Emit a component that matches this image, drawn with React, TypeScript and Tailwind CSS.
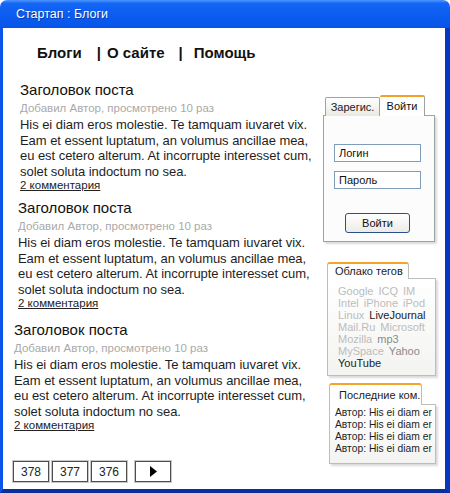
import React from "react";

// Wireframe of a blog page inside an XP-style window

type Post = {
  offset: string;
  gap: string;
};

const POSTS: Post[] = [
  { offset: "ml-[17px]", gap: "mt-[17px]" },
  { offset: "ml-[15px]", gap: "mt-[7px]" },
  { offset: "ml-[11px]", gap: "mt-[11px]" },
];

const BODY_LINES = [
  "His ei diam eros molestie. Te tamquam iuvaret vix.",
  "Eam et essent luptatum, an volumus ancillae mea,",
  "eu est cetero alterum. At incorrupte interesset cum,",
  "solet soluta indoctum no sea.",
];

const TAG_LINES: { text: string; dark?: boolean; mid?: boolean }[][] = [
  [{ text: "Google" }, { text: "ICQ" }, { text: "IM" }],
  [{ text: "Intel" }, { text: "iPhone" }, { text: "iPod" }],
  [{ text: "Linux" }, { text: "LiveJournal", dark: true }],
  [{ text: "Mail.Ru" }, { text: "Microsoft" }],
  [{ text: "Mozilla" }, { text: "mp3", mid: true }],
  [{ text: "MySpace" }, { text: "Yahoo", mid: true }],
  [{ text: "YouTube", dark: true }],
];

function PostBlock({ post }: { post: Post }) {
  return (
    <div className={`${post.offset} ${post.gap}`}>
      <h2 className="text-[15px] leading-[20px] text-[#111]">Заголовок поста</h2>
      <p className="text-[11.5px] leading-[17px] text-[#a9a9a9]">
        Добавил Автор, просмотрено 10 раз
      </p>
      <div className="text-[13px] leading-[15.5px] text-[#1e1e1e] whitespace-nowrap tracking-[-0.05px]">
        {BODY_LINES.map((line) => (
          <div key={line}>{line}</div>
        ))}
      </div>
      <a className="block text-[11.5px] leading-[12px] text-[#222] underline underline-offset-[1px]">
        2 комментария
      </a>
    </div>
  );
}

function PagerButton({ children }: { children: React.ReactNode }) {
  return (
    <div className="w-[36px] h-[21px] flex items-center justify-center border border-[#4d4d4d] bg-white shadow-[0_0_0_1px_#c8c8c8] text-[12px] text-[#222]">
      {children}
    </div>
  );
}

export default function App() {
  return (
    <div
      className="w-[450px] h-[493px] flex flex-col bg-white"
      style={{ fontFamily: '"Liberation Sans", Arial, sans-serif' }}
    >
      {/* Title bar */}
      <div className="h-[28px] shrink-0 rounded-t-[7px] bg-[linear-gradient(to_bottom,#4b97ff_0%,#1466f5_12%,#0b5cf0_55%,#0954e8_100%)] flex items-center pl-[16px]">
        <span className="text-[12.5px] text-white [text-shadow:1px_1px_0_#0a3aa8]">
          Стартап : Блоги
        </span>
      </div>

      {/* Window body */}
      <div className="flex-1 flex border-l-[3px] border-l-[#0b55ea] border-r-[5px] border-r-[#0737bf] border-b-[4px] border-b-[#08309c]">
        {/* Main column */}
        <main className="w-[319px] flex flex-col">
          <nav className="mt-[15px] ml-[34px] flex items-center h-[20px] text-[15px] font-bold text-[#111]">
            <span>Блоги</span>
            <span className="ml-[15px]">|</span>
            <span className="ml-[6px]">О сайте</span>
            <span className="ml-[14px]">|</span>
            <span className="ml-[11px]">Помощь</span>
          </nav>

          {POSTS.map((post, i) => (
            <PostBlock key={i} post={post} />
          ))}

          {/* Pager */}
          <div className="mt-auto mb-[7px] ml-[10px] flex items-center">
            <PagerButton>378</PagerButton>
            <div className="ml-[3px]">
              <PagerButton>377</PagerButton>
            </div>
            <div className="ml-[3px]">
              <PagerButton>376</PagerButton>
            </div>
            <div className="ml-[8px]">
              <PagerButton>
                <svg width="8" height="11" viewBox="0 0 8 11">
                  <polygon points="1,0 8,5.5 1,11" fill="#000" />
                </svg>
              </PagerButton>
            </div>
          </div>
        </main>

        {/* Sidebar */}
        <aside className="flex-1 flex flex-col pt-[67px] text-[11px]">
          {/* Login tabs */}
          <div className="ml-[3px] flex items-end relative z-10 -mb-px">
            <div className="w-[55px] h-[19px] flex items-center justify-center border border-[#9ba3a5] border-b-0 rounded-t-[2px] bg-[linear-gradient(to_bottom,#ffffff,#e9e9e2)] text-[#222]">
              Зарегис.
            </div>
            <div className="w-[45px] h-[21px] flex items-center justify-center border border-[#9ba3a5] border-t-[2px] border-t-[#f0a32a] border-b-0 border-l-0 rounded-t-[2px] bg-white text-[#111]">
              Войти
            </div>
          </div>
          <div className="ml-[1px] w-[112px] h-[127px] border border-[#9ba3a5] bg-[#fcfcfc] shadow-[2px_2px_2px_rgba(0,0,0,0.15)] flex flex-col pl-[10px]">
            <div className="mt-[28px] w-[87px] h-[18px] border border-[#7f9db9] bg-white flex items-center pl-[4px] text-[#111]">
              Логин
            </div>
            <div className="mt-[9px] w-[87px] h-[18px] border border-[#7f9db9] bg-white flex items-center pl-[4px] text-[#111]">
              Пароль
            </div>
            <div className="mt-[24px] ml-[11px] w-[65px] h-[20px] rounded-[3px] border border-[#2c4f8a] bg-[linear-gradient(to_bottom,#ffffff,#ecebe6)] flex items-center justify-center text-[#111]">
              Войти
            </div>
          </div>

          {/* Tag cloud */}
          <div className="mt-[20px] ml-[5px]">
            <div className="relative z-10 -mb-px w-[82px] h-[17px] border border-[#bdbdbd] border-t-[2px] border-t-[#f2a526] border-b-0 rounded-t-[3px] bg-white flex items-center pl-[7px] text-[#222]">
              Облако тегов
            </div>
            <div className="w-[109px] border border-[#bdbdbd] bg-[linear-gradient(to_bottom,#ffffff,#f3f3f1)] shadow-[2px_2px_2px_rgba(0,0,0,0.15)] pl-[10px] pt-[6px] pb-[6px]">
              {TAG_LINES.map((line, i) => (
                <div key={i} className="flex gap-x-[5px] leading-[12px] whitespace-nowrap">
                  {line.map((tag) => (
                    <span
                      key={tag.text}
                      className={
                        tag.dark
                          ? "text-[#222]"
                          : tag.mid
                            ? "text-[#8a8a8a]"
                            : "text-[#bcbcbc]"
                      }
                    >
                      {tag.text}
                    </span>
                  ))}
                </div>
              ))}
            </div>
          </div>

          {/* Last comments */}
          <div className="mt-[7px] ml-[7px]">
            <div className="relative z-10 -mb-px w-[93px] h-[22px] border border-[#bdbdbd] border-t-[2px] border-t-[#f2a526] border-b-0 rounded-t-[3px] bg-white flex items-center pl-[9px] text-[#222]">
              Последние ком.
            </div>
            <div className="w-[107px] overflow-hidden border border-[#bdbdbd] bg-[linear-gradient(to_bottom,#ffffff,#f3f3f1)] shadow-[2px_2px_2px_rgba(0,0,0,0.15)] pl-[5px] pt-[2px] pb-[8px] text-[10.3px] text-[#1e1e1e] whitespace-nowrap">
              <div className="leading-[12px]">Автор: His ei diam er</div>
              <div className="leading-[12px]">Автор: His ei diam er</div>
              <div className="leading-[12px]">Автор: His ei diam er</div>
              <div className="leading-[12px]">Автор: His ei diam er</div>
            </div>
          </div>
        </aside>
      </div>
    </div>
  );
}
